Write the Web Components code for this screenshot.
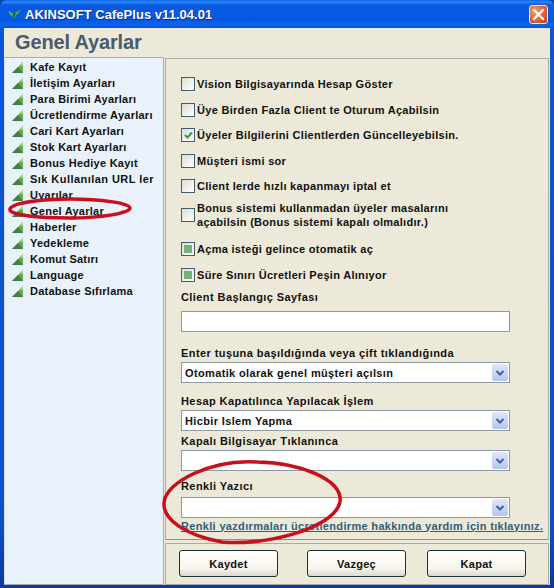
<!DOCTYPE html>
<html>
<head>
<meta charset="utf-8">
<style>
    html, body { margin: 0; padding: 0; background: #0a3fb0; }
    body { font: bold 11px "Liberation Sans", sans-serif; color: #111; }
</style>
</head>
<body>
<xp-window heading="AKINSOFT CafePlus v11.04.01" subtitle="Genel Ayarlar">
    <xp-nav slot="nav">
        <nav-item>Kafe Kayıt</nav-item>
        <nav-item>İletişim Ayarları</nav-item>
        <nav-item>Para Birimi Ayarları</nav-item>
        <nav-item>Ücretlendirme Ayarları</nav-item>
        <nav-item>Cari Kart Ayarları</nav-item>
        <nav-item>Stok Kart Ayarları</nav-item>
        <nav-item>Bonus Hediye Kayıt</nav-item>
        <nav-item style="letter-spacing:.45px">Sık Kullanılan URL ler</nav-item>
        <nav-item>Uyarılar</nav-item>
        <nav-item>Genel Ayarlar</nav-item>
        <nav-item>Haberler</nav-item>
        <nav-item>Yedekleme</nav-item>
        <nav-item>Komut Satırı</nav-item>
        <nav-item>Language</nav-item>
        <nav-item>Database Sıfırlama</nav-item>
    </xp-nav>

    <xp-check style="--top:0px">Vision Bilgisayarında Hesap Göster</xp-check>
    <xp-check>Üye Birden Fazla Client te Oturum Açabilsin</xp-check>
    <xp-check state="checked">Üyeler Bilgilerini Clientlerden Güncelleyebilsin.</xp-check>
    <xp-check>Müşteri ismi sor</xp-check>
    <xp-check>Client lerde hızlı kapanmayı iptal et</xp-check>
    <xp-check tall style="--top:8px">Bonus sistemi kullanmadan üyeler masalarını<br>açabilsin (Bonus sistemi kapalı olmalıdır.)</xp-check>
    <xp-check state="mixed" style="--top:13px">Açma isteği gelince otomatik aç</xp-check>
    <xp-check state="mixed" style="--top:12px">Süre Sınırı Ücretleri Peşin Alınıyor</xp-check>

    <xp-field label="Client Başlangıç Sayfası" style="--top:8.5px;--gap:7.5px"><xp-input></xp-input></xp-field>
    <xp-field label="Enter tuşuna başıldığında veya çift tıklandığında" style="--top:14.5px;--gap:2.5px"><xp-combo>Otomatik olarak genel müşteri açılsın</xp-combo></xp-field>
    <xp-field label="Hesap Kapatılınca Yapılacak İşlem" style="--top:11.5px;--gap:2.5px"><xp-combo>Hicbir Islem Yapma</xp-combo></xp-field>
    <xp-field label="Kapalı Bilgisayar Tıklanınca" style="--top:3.5px;--gap:2.5px"><xp-combo></xp-combo></xp-field>
    <xp-field label="Renkli Yazıcı" style="--top:8.5px;--gap:4.5px"><xp-combo></xp-combo></xp-field>
    <xp-link>Renkli yazdırmaları ücretlendirme hakkında yardım için tıklayınız.</xp-link>

    <xp-button slot="footer">Kaydet</xp-button>
    <xp-button slot="footer" style="--left:29px">Vazgeç</xp-button>
    <xp-button slot="footer" style="--left:21px">Kapat</xp-button>
</xp-window>

<script>
class XpWindow extends HTMLElement {
    constructor() {
        super();
        this.attachShadow({ mode: 'open' });
    }

    connectedCallback() {
        this.shadowRoot.innerHTML = `
            <style>
                :host {
                    display: block;
                    position: relative;
                    width: 554px;
                    height: 588px;
                    overflow: hidden;
                }
                #frame {
                    box-sizing: border-box;
                    height: 100%;
                    display: flex;
                    flex-direction: column;
                    padding: 0 4px 3px;
                    background: linear-gradient(#0a5ce0, #0a55d8 30px, #0b4fc8 520px, #0a3a9c);
                    border-radius: 7px 7px 0 0;
                }
                #title {
                    height: 28px;
                    flex: none;
                    margin: 0 -4px;
                    padding: 1px 6px 0 8px;
                    box-sizing: border-box;
                    display: flex;
                    align-items: center;
                    gap: 4px;
                    background: linear-gradient(#0a63e8 0, #2a86f4 2px, #0a5ae0 5px, #0557e2 20px, #0a66ee 25px, #0852d0 28px);
                    border-radius: 7px 7px 0 0;
                    color: #fff;
                    font: bold 13px "Liberation Sans", sans-serif;
                    letter-spacing: .03px;
                    text-shadow: 1px 1px 0 #0a2f90;
                }
                #title span { flex: 1; }
                #head {
                    height: 29px;
                    flex: none;
                    padding-left: 11px;
                    background: #ece9d8;
                    color: #4a5a70;
                    font: bold 20px/28px "Liberation Sans", sans-serif;
                    letter-spacing: -.15px;
                }
                #body {
                    flex: 1;
                    min-height: 0;
                    display: flex;
                    gap: 1px;
                    background: #ece9d8;
                }
                #nav {
                    width: 160px;
                    flex: none;
                    box-sizing: border-box;
                    background: #e9f1fb;
                    border: 1px solid #a9aca6;
                    border-left-color: #d6dfe8;
                }
                #right {
                    flex: 1;
                    min-width: 0;
                    display: flex;
                    flex-direction: column;
                    gap: 3px;
                    padding-right: 1px;
                }
                #main {
                    flex: 1;
                    box-sizing: border-box;
                    margin-top: 1px;
                    padding: 18px 0 0 15px;
                    border: 1px solid #a9aca6;
                    border-bottom-color: #8f918b;
                }
                #footer {
                    height: 42px;
                    flex: none;
                    box-sizing: border-box;
                    padding: 6px 0 0 13px;
                    display: flex;
                    border: 1px solid #a9aca6;
                }
                #marks {
                    position: absolute;
                    left: 0;
                    top: 0;
                    pointer-events: none;
                }
            </style>
            <div id="frame">
                <div id="title">
                    <svg width="13" height="10" viewBox="0 0 13 10">
                        <path d="M0 1l5 2 3-1 5-2-3 4-2 1-1 4-3-3-2-1z" fill="#3fae5a"/>
                        <path d="M5 3l3-1-1 3 0 4-2-3z" fill="#0d6a50"/>
                    </svg>
                    <span>${this.getAttribute('heading')}</span>
                    <xp-close></xp-close>
                </div>
                <div id="head">${this.getAttribute('subtitle')}</div>
                <div id="body">
                    <div id="nav"><slot name="nav"></slot></div>
                    <div id="right">
                        <div id="main"><slot></slot></div>
                        <div id="footer"><slot name="footer"></slot></div>
                    </div>
                </div>
            </div>
            <svg id="marks" width="554" height="588" fill="none" stroke="#c70f1e" stroke-width="3.5">
                <path d="M10 209c2-6 30-10 60-10s60 4 60 9-28 10-60 10-62-3-60-9z"/>
                <path d="M257 462c-45-3-92 20-93 41-1 16 20 32 58 39 42 4 112-13 118-40 3-22-38-39-83-40z"/>
            </svg>
        `;
    }
}

class XpClose extends HTMLElement {
    constructor() {
        super();
        this.attachShadow({ mode: 'open' });
        this.shadowRoot.innerHTML = `
            <style>
                :host {
                    display: block;
                    width: 19px;
                    height: 19px;
                    margin-top: -1px;
                    box-sizing: border-box;
                    border: 1px solid #f0e4dc;
                    border-radius: 3px;
                    background: radial-gradient(circle at 30% 30%, #ee9a78, #d4552e 70%, #b93c1c);
                }
                svg { display: block; }
            </style>
            <svg width="17" height="17" viewBox="0 0 17 17">
                <path d="M4 4l9 9M13 4l-9 9" stroke="#fff" stroke-width="2.2" stroke-linecap="square"/>
            </svg>
        `;
    }
}

class XpNav extends HTMLElement {
    constructor() {
        super();
        this.attachShadow({ mode: 'open' });
        this.shadowRoot.innerHTML = `
            <style>
                :host { display: block; padding-top: 1px; }
            </style>
            <slot></slot>
        `;
    }
}

class NavItem extends HTMLElement {
    constructor() {
        super();
        this.attachShadow({ mode: 'open' });
        this.shadowRoot.innerHTML = `
            <style>
                :host {
                    display: flex;
                    align-items: center;
                    gap: 6px;
                    height: 16px;
                    padding-left: 6px;
                    white-space: nowrap;
                    letter-spacing: .25px;
                }
                svg { flex: none; }
            </style>
            <svg width="13" height="13" viewBox="0 0 13 13">
                <path d="M1 12L12 1v11z" fill="#5fae4e"/>
                <path d="M1 12l6-6 5 6z" fill="#4a7a4a"/>
                <path d="M9 4l3-3v4z" fill="#a6dd7c"/>
            </svg>
            <slot></slot>
        `;
    }
}

class XpCheck extends HTMLElement {
    constructor() {
        super();
        this.attachShadow({ mode: 'open' });
    }

    connectedCallback() {
        const state = this.getAttribute('state');
        let mark = '';
        if (state === 'checked') {
            mark = '<svg width="11" height="11" viewBox="0 0 11 11"><path d="M2 5l2.5 2.5L9 2.5" fill="none" stroke="#2f9e3e" stroke-width="2"/></svg>';
        } else if (state === 'mixed') {
            mark = '<i></i>';
        }
        this.shadowRoot.innerHTML = `
            <style>
                :host {
                    display: flex;
                    align-items: center;
                    gap: 2px;
                    height: ${this.hasAttribute('tall') ? 28 : 14}px;
                    margin-top: var(--top, 11.5px);
                    white-space: nowrap;
                    line-height: 14px;
                    letter-spacing: .3px;
                }
                #box {
                    width: 14px;
                    height: 14px;
                    box-sizing: border-box;
                    flex: none;
                    border: 1px solid #3f5f6f;
                    background: linear-gradient(135deg, #dcdcd6, #fff);
                    display: flex;
                    align-items: center;
                    justify-content: center;
                }
                i { width: 8px; height: 8px; background: #6fb57a; }
            </style>
            <div id="box">${mark}</div>
            <div><slot></slot></div>
        `;
    }
}

class XpField extends HTMLElement {
    constructor() {
        super();
        this.attachShadow({ mode: 'open' });
    }

    connectedCallback() {
        this.shadowRoot.innerHTML = `
            <style>
                :host {
                    display: block;
                    margin-top: var(--top, 0);
                    letter-spacing: .42px;
                }
                div { line-height: 13px; margin-bottom: var(--gap, 2px); white-space: nowrap; }
            </style>
            <div>${this.getAttribute('label')}</div>
            <slot></slot>
        `;
    }
}

class XpInput extends HTMLElement {
    constructor() {
        super();
        this.attachShadow({ mode: 'open' });
        this.shadowRoot.innerHTML = `
            <style>
                :host {
                    display: block;
                    width: 329px;
                    height: 21px;
                    box-sizing: border-box;
                    background: #fff;
                    border: 1px solid #8d9aa6;
                }
            </style>
        `;
    }
}

class XpCombo extends HTMLElement {
    constructor() {
        super();
        this.attachShadow({ mode: 'open' });
        this.shadowRoot.innerHTML = `
            <style>
                :host {
                    display: flex;
                    align-items: center;
                    width: 329px;
                    height: 21px;
                    box-sizing: border-box;
                    padding: 0 1px 0 3px;
                    background: #fff;
                    border: 1px solid #8d9aa6;
                    letter-spacing: .36px;
                }
                #text { flex: 1; }
                #arrow {
                    width: 16px;
                    height: 17px;
                    background: linear-gradient(#dfe8fa, #b4c6ee);
                    border-radius: 2px;
                }
                svg { display: block; }
            </style>
            <div id="text"><slot></slot></div>
            <div id="arrow">
                <svg width="16" height="17" viewBox="0 0 16 17">
                    <path d="M4.5 7l3.5 3.5L11.5 7" fill="none" stroke="#3f5f9f" stroke-width="2"/>
                </svg>
            </div>
        `;
    }
}

class XpLink extends HTMLElement {
    constructor() {
        super();
        this.attachShadow({ mode: 'open' });
        this.shadowRoot.innerHTML = `
            <style>
                :host {
                    display: block;
                    margin-top: 1.5px;
                    color: #2f5f7f;
                    line-height: 13px;
                    text-decoration: underline;
                    letter-spacing: .33px;
                    white-space: nowrap;
                }
            </style>
            <slot></slot>
        `;
    }
}

class XpButton extends HTMLElement {
    constructor() {
        super();
        this.attachShadow({ mode: 'open' });
        this.shadowRoot.innerHTML = `
            <style>
                :host {
                    display: flex;
                    align-items: center;
                    justify-content: center;
                    width: 99px;
                    height: 27px;
                    margin-left: var(--left, 0);
                    box-sizing: border-box;
                    border: 1px solid #1f3030;
                    border-radius: 3px;
                    background: linear-gradient(#fff, #f4f3ec 70%, #dcd8cc);
                    letter-spacing: .3px;
                }
            </style>
            <slot></slot>
        `;
    }
}

customElements.define('xp-window', XpWindow);
customElements.define('xp-close', XpClose);
customElements.define('xp-nav', XpNav);
customElements.define('nav-item', NavItem);
customElements.define('xp-check', XpCheck);
customElements.define('xp-field', XpField);
customElements.define('xp-input', XpInput);
customElements.define('xp-combo', XpCombo);
customElements.define('xp-link', XpLink);
customElements.define('xp-button', XpButton);
</script>
</body>
</html>
